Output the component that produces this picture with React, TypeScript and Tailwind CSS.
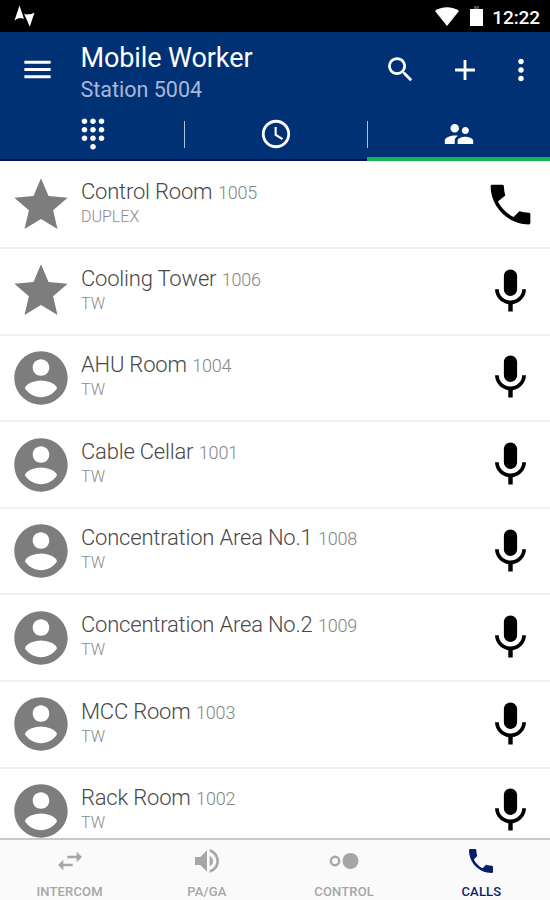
import React from "react";

const STAR = "M12 17.27L18.18 21l-1.64-7.03L22 9.24l-7.19-.61L12 2 9.19 8.63 2 9.24l5.46 4.73L5.82 21z";
const ACCOUNT =
  "M12 2C6.48 2 2 6.48 2 12s4.48 10 10 10 10-4.48 10-10S17.52 2 12 2zm0 3c1.66 0 3.100 1.34 3.100 3.100s-1.34 3.100-3.100 3.100-3.100-1.34-3.100-3.100 1.34-3.100 3.100-3.100zm0 14.2c-2.5 0-4.71-1.28-6-3.22.03-1.99 4-3.08 6-3.08 1.99 0 5.97 1.09 6 3.08-1.29 1.94-3.5 3.22-6 3.22z";
const PHONE =
  "M6.62 10.79c1.44 2.83 3.76 5.14 6.59 6.59l2.2-2.2c.27-.27.67-.36 1.02-.24 1.12.37 2.33.57 3.57.57.55 0 1 .45 1 1V20c0 .55-.45 1-1 1-9.39 0-17-7.61-17-17 0-.55.45-1 1-1h3.5c.55 0 1 .45 1 1 0 1.25.2 2.45.57 3.57.11.35.03.74-.25 1.02l-2.2 2.2z";
const CALL_HANDSET =
  "M3.700 3H8.300c.4 0 .7.3.7.7.05 1.500.25 2.900.65 4.200L6.300 10.600c1.600 3.100 4 5.500 7.100 7.100l2.600-2.600c1.400.4 2.800.6 4.300.6.4 0 .7.3.7.7v3.900c0 .4-.3.7-.7.7C10.900 21 3 13.100 3 3.700c0-.4.3-.7.7-.7z";
const MIC =
  "M12 14c1.66 0 2.99-1.34 2.99-3L15 5c0-1.66-1.34-3-3-3S9 3.34 9 5v6c0 1.66 1.34 3 3 3zm5.3-3c0 3-2.54 5.1-5.3 5.1S6.7 14 6.7 11H5c0 3.41 2.72 6.23 6 6.72V21h2v-3.28c3.28-.48 6-3.3 6-6.72h-1.7z";
const MENU = "M3 18h18v-2H3v2zm0-5h18v-2H3v2zm0-7v2h18V6H3z";
const SEARCH =
  "M15.5 14h-.79l-.28-.27C15.41 12.59 16 11.11 16 9.5 16 5.91 13.09 3 9.5 3S3 5.91 3 9.5 5.91 16 9.5 16c1.61 0 3.09-.59 4.23-1.57l.27.28v.79l5 4.99L20.49 19l-4.99-5zm-6 0C7.01 14 5 11.99 5 9.5S7.01 5 9.5 5 14 7.01 14 9.5 11.99 14 9.5 14z";
const PLUS = "M19 13h-6v6h-2v-6H5v-2h6V5h2v6h6v2z";
const MORE =
  "M12 8c1.1 0 2-.9 2-2s-.9-2-2-2-2 .9-2 2 .9 2 2 2zm0 2c-1.1 0-2 .9-2 2s.9 2 2 2 2-.9 2-2-.9-2-2-2zm0 6c-1.1 0-2 .9-2 2s.9 2 2 2 2-.9 2-2-.9-2-2-2z";
const DIALPAD =
  "M12 19c-1.1 0-2 .9-2 2s.9 2 2 2 2-.9 2-2-.9-2-2-2zM6 1c-1.1 0-2 .9-2 2s.9 2 2 2 2-.9 2-2-.9-2-2-2zm0 6c-1.1 0-2 .9-2 2s.9 2 2 2 2-.9 2-2-.9-2-2-2zm0 6c-1.1 0-2 .9-2 2s.9 2 2 2 2-.9 2-2-.9-2-2-2zm12-8c1.1 0 2-.9 2-2s-.9-2-2-2-2 .9-2 2 .9 2 2 2zm-6 8c-1.1 0-2 .9-2 2s.9 2 2 2 2-.9 2-2-.9-2-2-2zm6 0c-1.1 0-2 .9-2 2s.9 2 2 2 2-.9 2-2-.9-2-2-2zm0-6c-1.1 0-2 .9-2 2s.9 2 2 2 2-.9 2-2-.9-2-2-2zm-6 0c-1.1 0-2 .9-2 2s.9 2 2 2 2-.9 2-2-.9-2-2-2zm0-6c-1.1 0-2 .9-2 2s.9 2 2 2 2-.9 2-2-.9-2-2-2z";
const CLOCK =
  "M11.99 2C6.47 2 2 6.48 2 12s4.47 10 9.99 10C17.52 22 22 17.52 22 12S17.52 2 11.99 2zM12 20c-4.42 0-8-3.58-8-8s3.58-8 8-8 8 3.58 8 8-3.58 8-8 8zm.5-13H11v6l5.25 3.15.75-1.23-4.5-2.67z";
const GROUP =
  "M16.5 12c1.38 0 2.49-1.12 2.49-2.5S17.88 7 16.5 7C15.12 7 14 8.12 14 9.5s1.12 2.5 2.5 2.5zM9 11c1.66 0 2.99-1.34 2.99-3S10.66 5 9 5C7.34 5 6 6.34 6 8s1.34 3 3 3zm7.5 3c-1.83 0-5.5.92-5.5 2.75V19h11v-2.25c0-1.83-3.67-2.75-5.5-2.75zM9 13c-2.33 0-7 1.17-7 3.5V19h7v-2.25c0-.85.33-2.34 2.37-3.47C10.5 13.1 9.66 13 9 13z";
const SWAP = "M6.99 11L3 15l3.99 4v-3H14v-2H6.99v-3zM21 9l-3.99-4v3H10v2h7.01v3L21 9z";
const VOLUME =
  "M3 9v6h4l5 5V4L7 9H3zm13.5 3c0-1.77-1.02-3.29-2.5-4.03v8.05c1.48-.73 2.5-2.25 2.5-4.02zM14 3.23v2.06c2.89.86 5 3.54 5 6.71s-2.11 5.85-5 6.71v2.06c4.01-.91 7-4.49 7-8.77s-2.99-7.86-7-8.77z";

function Icon({ d, className }: { d: string; className: string }) {
  return (
    <svg viewBox="0 0 24 24" fill="currentColor" className={`shrink-0 ${className}`}>
      <path d={d} />
    </svg>
  );
}

const contacts = [
  { name: "Control Room", number: "1005", mode: "DUPLEX", favourite: true },
  { name: "Cooling Tower", number: "1006", mode: "TW", favourite: true },
  { name: "AHU Room", number: "1004", mode: "TW" },
  { name: "Cable Cellar", number: "1001", mode: "TW" },
  { name: "Concentration Area No.1", number: "1008", mode: "TW" },
  { name: "Concentration Area No.2", number: "1009", mode: "TW" },
  { name: "MCC Room", number: "1003", mode: "TW" },
  { name: "Rack Room", number: "1002", mode: "TW" },
];

function StatusBar() {
  return (
    <div className="flex h-8 shrink-0 items-center bg-black pr-[10px] pl-[14px] text-white">
      <svg viewBox="0 0 22 22" fill="currentColor" className="h-[22px] w-[22px]">
        <path d="M5.5.5 10 14 5.5 12.200.5 15.500zM10 8.500l4 2.300 6.500-3.200-4.700 14.200z" />
        <path d="M3.500 7.500h4l1.500 5.500-6.500.5zM12 9.500l6.500-.5-2.500 7z" />
      </svg>
      <svg viewBox="0 0 24 19" fill="currentColor" className="ml-auto h-[19px] w-6">
        <path d="M12 19 0 4C6.500-.9 17.500-.9 24 4z" />
      </svg>
      <svg viewBox="0 0 13 20" fill="currentColor" className="ml-[11px] h-5 w-[13px]">
        <path d="M0 3h13v17H0z" />
        <path d="M4 0h5v3H4z" opacity=".3" />
      </svg>
      <span className="ml-[9px] pt-0.5 text-[19px] leading-none font-medium tracking-[-0.1px]">12:22</span>
    </div>
  );
}

function Header() {
  return (
    <header className="flex h-[129px] shrink-0 flex-col bg-[#003174] text-white">
      <div className="flex h-[75px] items-center pl-5">
        <Icon d={MENU} className="h-[35px] w-[35px]" />
        <div className="flex flex-col pt-[9px] pl-[25.5px]">
          <span className="text-[27px] leading-8 tracking-[-0.1px]">Mobile Worker</span>
          <span className="text-[21.500px] leading-8 text-[#aab6d8]">Station 5004</span>
        </div>
        <div className="ml-auto flex items-center pr-3">
          <Icon d={SEARCH} className="h-[33px] w-[33px]" />
          <Icon d={PLUS} className="ml-[31px] h-[34px] w-[34px]" />
          <Icon d={MORE} className="ml-[22.5px] h-[34px] w-[34px]" />
        </div>
      </div>
      <div className="grid h-[54px] grid-cols-3">
        <div className="flex items-center justify-center border-b-2 border-[#00145f] pt-0.5 pl-0.5">
          <Icon d={DIALPAD} className="h-[34px] w-[34px]" />
        </div>
        <div className="flex items-center border-b-2 border-[#00145f] pt-0.5">
          <i className="ml-px h-[27px] w-px bg-[#b4bfdc]" />
          <Icon d={CLOCK} className="mx-auto h-[34px] w-[34px]" />
        </div>
        <div className="flex items-center border-b-4 border-[#12b954] pt-1">
          <i className="h-[27px] w-px bg-[#b4bfdc]" />
          <Icon d={GROUP} className="mx-auto h-[34px] w-[34px]" />
        </div>
      </div>
    </header>
  );
}

const tabs = [
  { label: "INTERCOM", icon: SWAP },
  { label: "PA/GA", icon: VOLUME },
  { label: "CONTROL" },
  { label: "CALLS", icon: PHONE, active: true },
];

export default function App() {
  return (
    <div className="flex h-[900px] w-[550px] flex-col overflow-hidden bg-white font-['Roboto',sans-serif]">
      <StatusBar />
      <Header />
      <main className="min-h-0 flex-1 overflow-hidden pt-[1.5px]">
        {contacts.map((c) => (
          <div key={c.number} className="flex h-[86.6px] items-center border-b-2 border-[#f1f1f1] pr-[13px] pl-[8.5px]">
            <Icon d={c.favourite ? STAR : ACCOUNT} className="h-16 w-16 text-[#7d7d7d]" />
            <div className="flex h-full flex-col pt-[14.5px] pl-[8.5px]">
              <div className="flex items-baseline gap-[5.5px] leading-[29px]">
                <span className="text-[22px] font-light tracking-[-0.2px] text-[#484848]">{c.name}</span>
                <span className="text-[18px] font-light tracking-[-0.2px] text-[#858585]">{c.number}</span>
              </div>
              <span className="text-[16px] leading-[20px] font-light text-[#8a8a8a]">{c.mode}</span>
            </div>
            <Icon d={c.mode === "DUPLEX" ? CALL_HANDSET : MIC} className="ml-auto h-[53px] w-[53px] text-black" />
          </div>
        ))}
      </main>
      <nav className="grid h-[62px] shrink-0 grid-cols-4 border-t-2 border-[#c9c9c9] bg-[#fafafa] pl-px">
        {tabs.map((t) => (
          <div
            key={t.label}
            className={`flex flex-col items-center pt-[5px] ${t.active ? "text-[#061d6b]" : "text-[#a6a6a6]"}`}
          >
            {t.icon ? (
              <Icon d={t.icon} className="h-8 w-8" />
            ) : (
              <svg viewBox="0 0 32 32" className="h-8 w-8">
                <circle cx="7" cy="16" r="4.200" fill="none" stroke="currentColor" strokeWidth="2.400" />
                <circle cx="22.500" cy="16" r="8" fill="currentColor" />
              </svg>
            )}
            <span className="pt-[7px] text-[13px] leading-4 font-medium tracking-[0.15px]">{t.label}</span>
          </div>
        ))}
      </nav>
    </div>
  );
}
